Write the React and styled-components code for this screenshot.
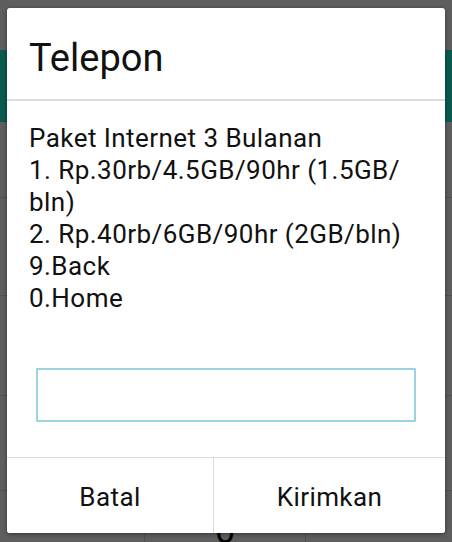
import React from 'react';
import styled, { createGlobalStyle } from 'styled-components';

const GlobalStyle = createGlobalStyle`
    html, body {
        margin: 0;
        padding: 0;
        background: #5e5e5e;
    }

    body {
        font-family: Roboto, "Noto Sans", "Liberation Sans", sans-serif;
    }
`;

const Screen = styled.div`
    position: relative;
    width: 452px;
    height: 542px;
    overflow: hidden;
    background: #5e5e5e;
    display: flex;
    flex-direction: column;

    & > * {
        flex-shrink: 0;
    }
`;

const AppBar = styled.div`
    margin-top: 50px;
    height: 72px;
    background: #0a5a50;
`;

const Display = styled.div`
    height: 75px;
    border-bottom: 1px solid #515151;
`;

const KeyRow = styled.div`
    display: grid;
    grid-template-columns: 145px 161px 1fr;
    height: ${props => props.height}px;
    border-bottom: 1px solid #515151;
`;

const Key = styled.div`
    display: flex;
    justify-content: center;
    padding-top: 20px;
    font-size: 36px;
    line-height: 40px;
    color: #000;
    border-right: 1px solid #515151;

    &:last-child {
        border-right: none;
    }
`;

const Dialog = styled.div`
    position: absolute;
    left: 7px;
    top: 8px;
    width: 438px;
    height: 525px;
    background: #fff;
    border-radius: 3px;
    box-shadow: 0 1px 4px rgba(0, 0, 0, 0.45);
    display: flex;
    flex-direction: column;
    overflow: hidden;
`;

const Title = styled.div`
    height: 91px;
    box-sizing: border-box;
    padding: 31px 0 0 22px;
    font-size: 38px;
    line-height: 38px;
    color: #111;
`;

const Divider = styled.div`
    height: 2px;
    background: #dcdcdc;
`;

const Body = styled.div`
    padding: 21px 22px 0 22px;
    font-size: 26px;
    line-height: 32px;
    letter-spacing: 0.45px;
    color: #111;
`;

const Line = styled.div`
    white-space: nowrap;
`;

const Field = styled.input`
    display: block;
    box-sizing: border-box;
    margin: 54px 0 35px 29px;
    width: 380px;
    height: 54px;
    border: 2px solid #99d3de;
    border-radius: 1px;
    outline: none;
    background: #fff;
    font: inherit;
    font-size: 26px;
`;

const ButtonBar = styled.div`
    display: grid;
    grid-template-columns: 206px 1fr;
    border-top: 1px solid #dadada;
    flex: 1;
`;

const Button = styled.button`
    border: none;
    border-left: ${props => props.divided ? '1px solid #dadada' : 'none'};
    background: #fff;
    padding: 3px 0 0 0;
    font-family: Roboto, "Noto Sans", "Liberation Sans", sans-serif;
    font-size: 26px;
    line-height: 32px;
    letter-spacing: 0.4px;
    color: #111;
`;

const lines = [
    'Paket Internet 3 Bulanan',
    '1. Rp.30rb/4.5GB/90hr (1.5GB/',
    'bln)',
    '2. Rp.40rb/6GB/90hr (2GB/bln)',
    '9.Back',
    '0.Home',
];

// only the digit peeking out under the dialog is drawn
const keypad = [
    { height: 97, keys: ['', '', ''] },
    { height: 99, keys: ['', '', ''] },
    { height: 94, keys: ['', '', ''] },
    { height: 80, keys: ['', '0', ''] },
];

export default function App() {
    return (
        <>
            <GlobalStyle />
            <Screen>
                <AppBar />
                <Display />
                {keypad.map((row, i) => (
                    <KeyRow key={i} height={row.height}>
                        {row.keys.map((k, j) => <Key key={j}>{k}</Key>)}
                    </KeyRow>
                ))}

                <Dialog>
                    <Title>Telepon</Title>
                    <Divider />
                    <Body>
                        {lines.map((text, i) => <Line key={i}>{text}</Line>)}
                    </Body>
                    <Field type="text" />
                    <ButtonBar>
                        <Button>Batal</Button>
                        <Button divided>Kirimkan</Button>
                    </ButtonBar>
                </Dialog>
            </Screen>
        </>
    );
}
